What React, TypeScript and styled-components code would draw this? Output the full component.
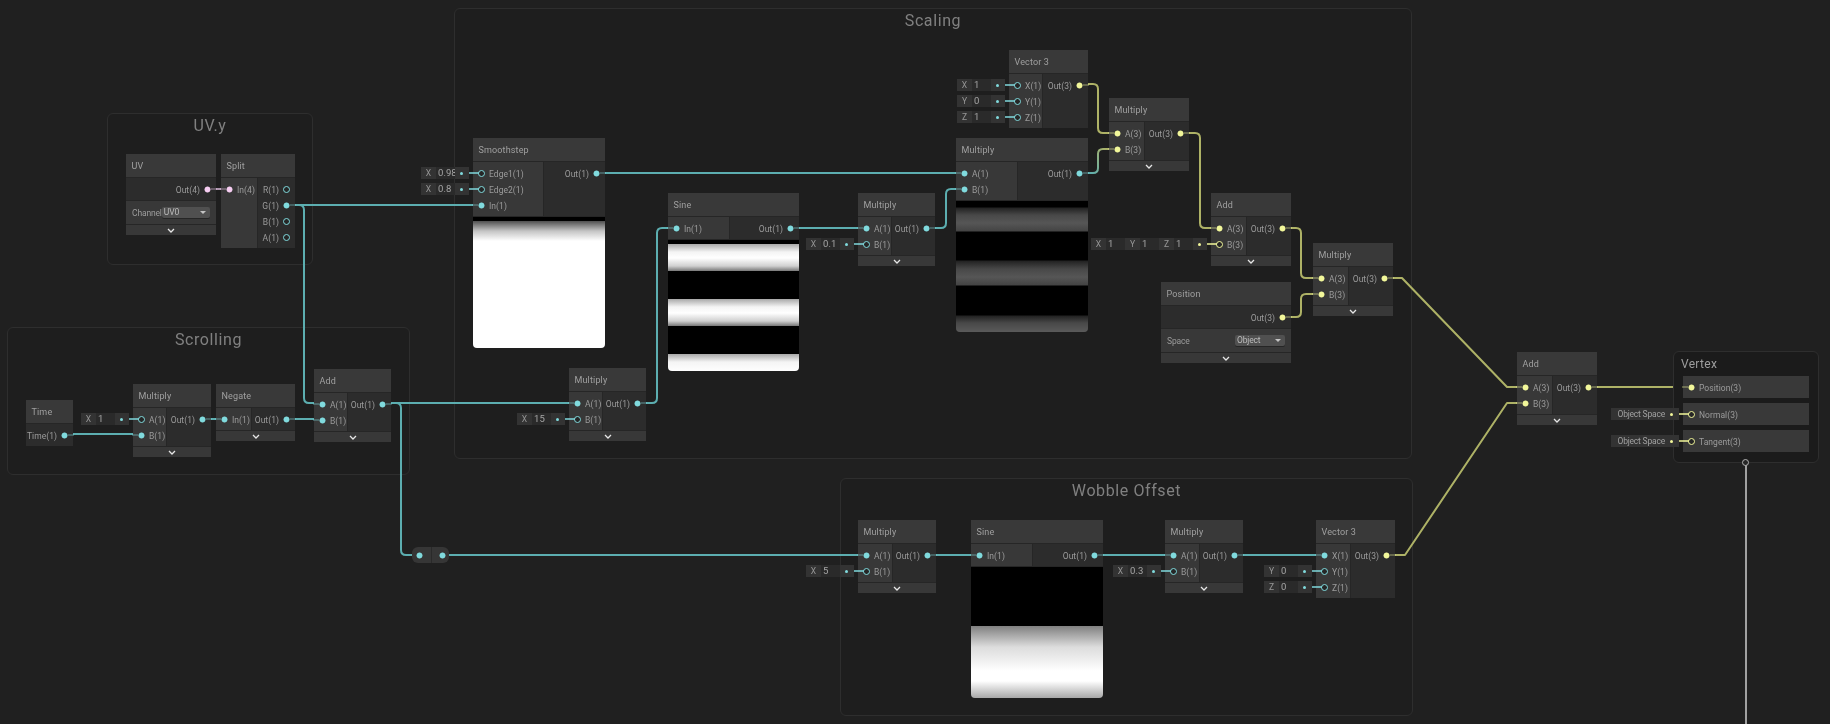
import React from 'react';
import styled, { createGlobalStyle } from 'styled-components';

const CYAN = '#80dadd';
const YELLOW = '#f2f79a';
const PINK = '#f6cdf2';
const CYAN_WIRE = '#5caeb0';
const YELLOW_WIRE = '#aeb266';
const PINK_WIRE = '#ae94ae';

const GlobalStyle = createGlobalStyle`
  html, body {
    margin: 0;
    height: 100%;
    overflow: hidden;
    background: #202020;
    font-family: 'Roboto', 'Liberation Sans', sans-serif;
  }
`;

const Canvas = styled.div`
  position: relative;
  width: 1830px;
  height: 724px;
  overflow: hidden;
  background: #202020;
  filter: blur(0.3px);
`;

const Group = styled.section<{ $x: number; $y: number; $w: number; $h: number }>`
  position: absolute;
  left: ${(p) => p.$x}px;
  top: ${(p) => p.$y}px;
  width: ${(p) => p.$w}px;
  height: ${(p) => p.$h}px;
  box-sizing: border-box;
  background: #1e1e1e;
  border: 1px solid #2e2e2e;
  border-radius: 6px;
  text-align: center;
`;

const GroupTitle = styled.h2`
  margin: 0;
  font-size: 16px;
  line-height: 24px;
  font-weight: 400;
  letter-spacing: 0.6px;
  color: #808080;
`;

const WireLayer = styled.svg`
  position: absolute;
  left: 0;
  top: 0;
  pointer-events: none;
`;

const Node = styled.article<{ $x: number; $y: number; $w: number }>`
  position: absolute;
  left: ${(p) => p.$x}px;
  top: ${(p) => p.$y}px;
  width: ${(p) => p.$w}px;
  display: flex;
  flex-direction: column;
  background: #2c2c2c;
  border-radius: 0 0 4px 4px;
`;

const NodeTitle = styled.header`
  height: 24px;
  box-sizing: border-box;
  display: flex;
  align-items: center;
  padding-left: 5.5px;
  background: #393939;
  border-bottom: 1px solid #262626;
  font-size: 9px;
  letter-spacing: 0.15px;
  color: #a0a0a0;
`;

const Body = styled.div`
  display: flex;
`;

const PortColumn = styled.div<{ $w?: number; $in?: boolean }>`
  box-sizing: border-box;
  padding: 3px 0;
  min-width: 0;
  ${(p) => (p.$w ? `width: ${p.$w}px;` : 'flex: 1;')}
  background: ${(p) => (p.$in ? '#383838' : '#2c2c2c')};
  ${(p) => (p.$in ? 'border-right: 1px solid #262626;' : '')}
`;

const Row = styled.div<{ $in?: boolean }>`
  position: relative;
  height: 16px;
  box-sizing: border-box;
  padding: 0 5px;
  display: flex;
  flex-direction: ${(p) => (p.$in ? 'row' : 'row-reverse')};
  align-items: center;
  gap: 4px;
  font-size: 8.5px;
  letter-spacing: 0.05px;
  color: #9c9c9c;
  white-space: nowrap;
`;

const PortLabel = styled.span`
  padding-top: 1px;
`;

const Dot = styled.span<{ $color: string; $linked?: boolean; $in?: boolean; $stub?: boolean; $bare?: boolean }>`
  position: relative;
  flex: none;
  width: 7px;
  height: 7px;
  box-sizing: border-box;
  border-radius: 50%;
  background: ${(p) => (p.$linked ? `radial-gradient(circle, ${p.$color} 0 2.6px, transparent 3.4px)` : '#262626')};
  border: ${(p) => (p.$linked ? 'none' : `1.5px solid ${p.$color}`)};

  &::after {
    content: ${(p) => (!p.$bare && (p.$linked || p.$stub) ? "''" : 'none')};
    position: absolute;
    top: ${(p) => (p.$linked ? '2.5px' : '1px')};
    height: 2px;
    width: ${(p) => (p.$stub ? '10px' : '6px')};
    ${(p) => (p.$in ? `right: ${p.$stub ? '5px' : '7px'};` : 'left: 7px;')}
    background: ${(p) => p.$color};
    opacity: ${(p) => (p.$stub ? 0.75 : 0.3)};
  }
`;

const Inline = styled.div`
  position: absolute;
  right: calc(100% + 4px);
  top: 2px;
  height: 12px;
  display: flex;
  align-items: center;
  background: #333333;
  color: #b8b8b8;
  font-size: 8.5px;
`;

const InlineKey = styled.span`
  width: 15px;
  text-align: center;
  color: #979797;
`;

const InlineInput = styled.span`
  width: 17px;
  height: 12px;
  padding-left: 2px;
  line-height: 12px;
  background: #2a2a2a;
  overflow: hidden;
  font-size: 9.5px;
  color: #a6a6a6;
`;

const InlineText = styled.span`
  padding-left: 6px;
  font-size: 8.5px;
  letter-spacing: -0.2px;
  color: #a0a0a0;
`;

const InlineDot = styled.span<{ $color: string }>`
  position: relative;
  width: 14px;
  height: 12px;

  &::after {
    content: '';
    position: absolute;
    left: 5px;
    top: 4.5px;
    width: 3px;
    height: 3px;
    border-radius: 50%;
    background: ${(p) => p.$color};
  }
`;

const Preview = styled.div<{ $fill: string }>`
  height: 132px;
  background: ${(p) => p.$fill};
  border-radius: 0 0 4px 4px;
  border-top: 1px solid #262626;
  box-sizing: border-box;
`;

const ControlRow = styled.div`
  height: 24px;
  box-sizing: border-box;
  padding: 0 6px;
  display: flex;
  align-items: center;
  justify-content: space-between;
  background: #383838;
  border-top: 1px solid #262626;
  font-size: 8.5px;
  letter-spacing: -0.15px;
  color: #9c9c9c;
`;

const Dropdown = styled.div`
  position: relative;
  width: 50px;
  height: 11px;
  box-sizing: border-box;
  padding-left: 2px;
  line-height: 11px;
  background: #505050;
  border-radius: 2px;
  box-shadow: 0 1px 0 #262626;
  color: #bcbcbc;

  &::after {
    content: '';
    position: absolute;
    right: 4px;
    top: 4px;
    border-left: 3px solid transparent;
    border-right: 3px solid transparent;
    border-top: 3px solid #c4c4c4;
  }
`;

const Collapse = styled.div`
  height: 11px;
  display: flex;
  align-items: center;
  justify-content: center;
  background: #383838;
  border-top: 1px solid #262626;
  box-sizing: border-box;
`;

const Redirect = styled.div`
  position: absolute;
  left: 412px;
  top: 547px;
  width: 37px;
  height: 16px;
  display: flex;
  background: #363636;
  border-radius: 6px;
`;

const RedirectHalf = styled.div`
  flex: 1;
  display: flex;
  align-items: center;
  justify-content: flex-end;
  padding-right: 3px;

  &:first-child {
    justify-content: flex-start;
    padding: 0 0 0 4px;
    border-right: 1px solid #2a2a2a;
  }
`;

const Vertex = styled.section`
  position: absolute;
  left: 1673px;
  top: 351px;
  width: 146px;
  height: 112px;
  box-sizing: border-box;
  padding: 0 9px;
  display: flex;
  flex-direction: column;
  gap: 5px;
  background: #1b1b1b;
  border: 1px solid #2e2e2e;
  border-radius: 6px;
`;

const VertexTitle = styled.h3`
  margin: 0 0 0 -2px;
  height: 15px;
  padding-top: 4px;
  font-size: 12px;
  line-height: 17px;
  font-weight: 400;
  letter-spacing: 0.3px;
  color: #9e9e9e;
`;

const VertexRow = styled.div`
  height: 22px;
  display: flex;
  flex-direction: column;
  justify-content: center;
  background: #393939;
`;

const VertexPort = styled.span`
  position: absolute;
  left: 68px;
  bottom: -4px;
  width: 7px;
  height: 7px;
  box-sizing: border-box;
  border: 1.5px solid #b4b4b4;
  border-radius: 50%;
  background: #262626;
`;

type Port = { label: string; color?: string; linked?: boolean; fields?: [string, string][]; text?: string };
type GraphNode = {
  title: string;
  x: number;
  y: number;
  w: number;
  inW?: number;
  inputs?: Port[];
  outputs: Port[];
  preview?: string;
  control?: [string, string];
  chevron?: boolean;
};

const link = (label: string, color = CYAN): Port => ({ label, color, linked: true });
const open = (label: string, color = CYAN): Port => ({ label, color });
const val = (label: string, key: string, value: string): Port => ({ label, fields: [[key, value]] });

const sineBands =
  'linear-gradient(#000 0 4px, #a8a8a8 4px, #f4f4f4 12px, #fff 18px, #d0d0d0 26px, #777 31px, #000 31px,' +
  '#000 59px, #a8a8a8 59px, #f4f4f4 67px, #fff 73px, #d0d0d0 81px, #777 86px, #000 86px,' +
  '#000 114px, #a8a8a8 114px, #f4f4f4 122px, #fff 132px)';
const dimBands =
  'linear-gradient(#000 0 6px, #222 7px, #484848 14px, #565656 22px, #444 30px, #000 31px,' +
  '#000 59px, #222 60px, #484848 68px, #565656 76px, #444 84px, #000 85px,' +
  '#000 114px, #222 115px, #484848 122px, #5c5c5c 132px)';
const smoothFill = 'linear-gradient(#000 0 4px, #505050 4px, #c4c4c4 14px, #fff 24px)';
const wobbleFill = 'linear-gradient(#000 0 59px, #808080 59px, #dcdcdc 80px, #fff 104px, #fff 114px, #a8a8a8 131px)';

const nodes: GraphNode[] = [
  { title: 'UV', x: 126, y: 154, w: 90, outputs: [link('Out(4)', PINK)], control: ['Channel', 'UV0'], chevron: true },
  {
    title: 'Split', x: 221, y: 154, w: 74, inW: 37,
    inputs: [link('In(4)', PINK)],
    outputs: [open('R(1)'), link('G(1)'), open('B(1)'), open('A(1)')],
  },
  { title: 'Time', x: 26, y: 400, w: 47, outputs: [link('Time(1)')] },
  {
    title: 'Multiply', x: 133, y: 384, w: 78, inW: 34, chevron: true,
    inputs: [val('A(1)', 'X', '1'), link('B(1)')], outputs: [link('Out(1)')],
  },
  { title: 'Negate', x: 216, y: 384, w: 79, inW: 36, chevron: true, inputs: [link('In(1)')], outputs: [link('Out(1)')] },
  { title: 'Add', x: 314, y: 369, w: 77, inW: 34, chevron: true, inputs: [link('A(1)'), link('B(1)')], outputs: [link('Out(1)')] },
  {
    title: 'Smoothstep', x: 473, y: 138, w: 132, inW: 71, preview: smoothFill,
    inputs: [val('Edge1(1)', 'X', '0.98'), val('Edge2(1)', 'X', '0.8'), link('In(1)')], outputs: [link('Out(1)')],
  },
  { title: 'Sine', x: 668, y: 193, w: 131, inW: 62, preview: sineBands, inputs: [link('In(1)')], outputs: [link('Out(1)')] },
  {
    title: 'Multiply', x: 569, y: 368, w: 77, inW: 34, chevron: true,
    inputs: [link('A(1)'), val('B(1)', 'X', '15')], outputs: [link('Out(1)')],
  },
  {
    title: 'Multiply', x: 858, y: 193, w: 77, inW: 34, chevron: true,
    inputs: [link('A(1)'), val('B(1)', 'X', '0.1')], outputs: [link('Out(1)')],
  },
  {
    title: 'Vector 3', x: 1009, y: 50, w: 79, inW: 34,
    inputs: [val('X(1)', 'X', '1'), val('Y(1)', 'Y', '0'), val('Z(1)', 'Z', '1')], outputs: [link('Out(3)', YELLOW)],
  },
  { title: 'Multiply', x: 956, y: 138, w: 132, inW: 62, preview: dimBands, inputs: [link('A(1)'), link('B(1)')], outputs: [link('Out(1)')] },
  {
    title: 'Multiply', x: 1109, y: 98, w: 80, inW: 36, chevron: true,
    inputs: [link('A(3)', YELLOW), link('B(3)', YELLOW)], outputs: [link('Out(3)', YELLOW)],
  },
  {
    title: 'Add', x: 1211, y: 193, w: 80, inW: 36, chevron: true,
    inputs: [link('A(3)', YELLOW), { label: 'B(3)', color: YELLOW, fields: [['X', '1'], ['Y', '1'], ['Z', '1']] }],
    outputs: [link('Out(3)', YELLOW)],
  },
  {
    title: 'Multiply', x: 1313, y: 243, w: 80, inW: 36, chevron: true,
    inputs: [link('A(3)', YELLOW), link('B(3)', YELLOW)], outputs: [link('Out(3)', YELLOW)],
  },
  { title: 'Position', x: 1161, y: 282, w: 130, outputs: [link('Out(3)', YELLOW)], control: ['Space', 'Object'], chevron: true },
  {
    title: 'Add', x: 1517, y: 352, w: 80, inW: 36, chevron: true,
    inputs: [link('A(3)', YELLOW), link('B(3)', YELLOW)], outputs: [link('Out(3)', YELLOW)],
  },
  {
    title: 'Multiply', x: 858, y: 520, w: 78, inW: 35, chevron: true,
    inputs: [link('A(1)'), val('B(1)', 'X', '5')], outputs: [link('Out(1)')],
  },
  { title: 'Sine', x: 971, y: 520, w: 132, inW: 62, preview: wobbleFill, inputs: [link('In(1)')], outputs: [link('Out(1)')] },
  {
    title: 'Multiply', x: 1165, y: 520, w: 78, inW: 35, chevron: true,
    inputs: [link('A(1)'), val('B(1)', 'X', '0.3')], outputs: [link('Out(1)')],
  },
  {
    title: 'Vector 3', x: 1316, y: 520, w: 79, inW: 35,
    inputs: [link('X(1)'), val('Y(1)', 'Y', '0'), val('Z(1)', 'Z', '0')], outputs: [link('Out(3)', YELLOW)],
  },
];

// elbow wire: horizontal, rounded turn at xm, vertical, rounded turn, horizontal
const elbow = (x1: number, y1: number, xm: number, y2: number, x2: number, r = 5) => {
  const s = y2 > y1 ? 1 : -1;
  return `M${x1} ${y1}H${xm - r}Q${xm} ${y1} ${xm} ${y1 + s * r}V${y2 - s * r}Q${xm} ${y2} ${xm + r} ${y2}H${x2}`;
};
const line = (x1: number, y: number, x2: number) => `M${x1} ${y}H${x2}`;

const cyanWires = [
  line(73, 434, 133),
  line(211, 419, 216),
  line(295, 419, 314),
  line(295, 205, 473),
  elbow(295, 205, 304, 403, 314),
  line(391, 403, 569),
  elbow(391, 403, 401, 555, 412),
  line(449, 555, 858),
  elbow(646, 403, 657, 228, 668),
  line(799, 228, 858),
  line(605, 173, 956),
  elbow(935, 228, 946, 189, 956),
  line(936, 555, 971),
  line(1103, 555, 1165),
  line(1243, 555, 1316),
];

const yellowWires = [
  elbow(1088, 84, 1098, 133, 1109),
  elbow(1189, 133, 1200, 228, 1211),
  elbow(1291, 228, 1301, 278, 1313),
  elbow(1291, 317, 1301, 294, 1313),
  'M1393 278H1402L1507 387H1517',
  'M1395 555H1405L1507 403H1517',
  line(1597, 387, 1683),
];

const PortRow = ({ port, input }: { port: Port; input?: boolean }) => {
  const color = port.color ?? CYAN;
  return (
    <Row $in={input}>
      {port.fields && (
        <Inline>
          {port.fields.map(([key, value]) => (
            <React.Fragment key={key}>
              <InlineKey>{key}</InlineKey>
              <InlineInput>{value}</InlineInput>
            </React.Fragment>
          ))}
          <InlineDot $color={color} />
        </Inline>
      )}
      {port.text && (
        <Inline>
          <InlineText>{port.text}</InlineText>
          <InlineDot $color={color} />
        </Inline>
      )}
      <Dot $color={color} $linked={port.linked} $in={input} $stub={!!(port.fields || port.text)} />
      <PortLabel>{port.label}</PortLabel>
    </Row>
  );
};

const Chevron = () => (
  <svg width="8" height="5" viewBox="0 0 8 5">
    <path d="M1 1l3 3 3-3" fill="none" stroke="#e6e6e6" strokeWidth="1.3" />
  </svg>
);

const ShaderNode = ({ node }: { node: GraphNode }) => (
  <Node $x={node.x} $y={node.y} $w={node.w}>
    <NodeTitle>{node.title}</NodeTitle>
    <Body>
      {node.inputs && (
        <PortColumn $in $w={node.inW}>
          {node.inputs.map((p) => (
            <PortRow key={p.label} port={p} input />
          ))}
        </PortColumn>
      )}
      <PortColumn>
        {node.outputs.map((p) => (
          <PortRow key={p.label} port={p} />
        ))}
      </PortColumn>
    </Body>
    {node.preview && <Preview $fill={node.preview} />}
    {node.control && (
      <ControlRow>
        <span>{node.control[0]}</span>
        <Dropdown>{node.control[1]}</Dropdown>
      </ControlRow>
    )}
    {node.chevron && (
      <Collapse>
        <Chevron />
      </Collapse>
    )}
  </Node>
);

export default function App() {
  return (
    <Canvas>
      <GlobalStyle />
      <Group $x={107} $y={113} $w={206} $h={152}>
        <GroupTitle>UV.y</GroupTitle>
      </Group>
      <Group $x={7} $y={327} $w={403} $h={148}>
        <GroupTitle>Scrolling</GroupTitle>
      </Group>
      <Group $x={454} $y={8} $w={958} $h={451}>
        <GroupTitle>Scaling</GroupTitle>
      </Group>
      <Group $x={840} $y={478} $w={573} $h={238}>
        <GroupTitle>Wobble Offset</GroupTitle>
      </Group>

      <WireLayer width="1830" height="724">
        <defs>
          <linearGradient id="mixWire" gradientUnits="userSpaceOnUse" x1="1088" y1="173" x2="1109" y2="149">
            <stop offset="0" stopColor={CYAN_WIRE} />
            <stop offset="1" stopColor={YELLOW_WIRE} />
          </linearGradient>
        </defs>
        <g fill="none" strokeWidth="2" strokeLinejoin="round">
          {cyanWires.map((d) => (
            <path key={d} d={d} stroke={CYAN_WIRE} />
          ))}
          {yellowWires.map((d) => (
            <path key={d} d={d} stroke={YELLOW_WIRE} />
          ))}
          <path d={elbow(1088, 173, 1098, 149, 1109)} stroke="url(#mixWire)" />
          <path d={line(216, 189, 229)} stroke={PINK_WIRE} />
          <path d="M1746 465V724" stroke="#a0a0a0" />
        </g>
      </WireLayer>

      {nodes.map((n) => (
        <ShaderNode key={`${n.title}-${n.x}-${n.y}`} node={n} />
      ))}

      <Redirect>
        <RedirectHalf>
          <Dot $color={CYAN} $linked $bare />
        </RedirectHalf>
        <RedirectHalf>
          <Dot $color={CYAN} $linked $bare />
        </RedirectHalf>
      </Redirect>

      <Vertex>
        <VertexTitle>Vertex</VertexTitle>
        <VertexRow>
          <PortRow port={link('Position(3)', YELLOW)} input />
        </VertexRow>
        <VertexRow>
          <PortRow port={{ label: 'Normal(3)', color: YELLOW, text: 'Object Space' }} input />
        </VertexRow>
        <VertexRow>
          <PortRow port={{ label: 'Tangent(3)', color: YELLOW, text: 'Object Space' }} input />
        </VertexRow>
        <VertexPort />
      </Vertex>
    </Canvas>
  );
}
